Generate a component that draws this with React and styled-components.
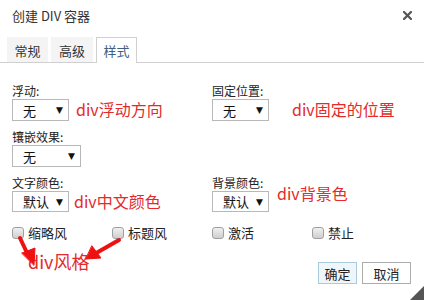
import React from 'react';
import styled, { createGlobalStyle } from 'styled-components';

const Global = createGlobalStyle`
  html, body { margin: 0; padding: 0; background: #fff; }
  body { font-family: "Noto Sans CJK SC", "Liberation Sans", sans-serif; color: #222; }
`;

const Dialog = styled.div`
  position: relative;
  width: 424px;
  height: 300px;
  background: #fff;
  overflow: hidden;
`;

const Header = styled.div`
  display: flex;
  align-items: center;
  justify-content: space-between;
  height: 30px;
  padding: 0 12px 0 12px;
  font-size: 13px;
  color: #333;
`;

const Tabs = styled.div`
  display: flex;
  gap: 3px;
  margin-top: 7px;
  padding: 0 7px;
  height: 25px;
  border-bottom: 1px solid #d0d0d0;
`;

const Tab = styled.div`
  display: flex;
  align-items: center;
  justify-content: center;
  width: ${({ $w }) => $w}px;
  box-sizing: border-box;
  font-size: 13px;
  color: ${({ $active }) => ($active ? '#41607f' : '#333')};
  background: ${({ $active }) => ($active ? '#fff' : '#f4f4f4')};
  border: 1px solid ${({ $active }) => ($active ? '#d0d0d0' : 'transparent')};
  border-bottom: none;
  margin-bottom: ${({ $active }) => ($active ? '-1px' : '0')};
`;

const Body = styled.div`
  padding: 20px 12px 0;
`;

const Grid = styled.div`
  display: grid;
  grid-template-columns: 200px 200px;
  row-gap: 8px;
`;

const Field = styled.div`
  display: flex;
  flex-direction: column;
`;

const Label = styled.div`
  font-size: 12px;
  line-height: 16px;
  height: 16px;
`;

const Line = styled.div`
  display: flex;
  align-items: ${({ $top }) => ($top ? 'flex-start' : 'center')};
`;

const Select = styled.div`
  display: flex;
  align-items: center;
  justify-content: space-between;
  box-sizing: border-box;
  width: ${({ $w }) => $w}px;
  height: ${({ $h }) => $h || 22}px;
  padding: 0 5px 0 10px;
  border: 1px solid #b8b8b8;
  background: #fff;
  font-size: 13px;
  color: #111;
`;

const Arrow = styled.span`
  font-size: 9px;
  color: #111;
  font-family: "DejaVu Sans", sans-serif;
`;

const Note = styled.span`
  margin-left: ${({ $gap }) => $gap}px;
  margin-top: ${({ $top }) => $top || 0}px;
  font-size: ${({ $size }) => $size || 16}px;
  line-height: 1.1;
  color: #e42a2a;
  white-space: nowrap;
`;

const Checks = styled.div`
  display: grid;
  grid-template-columns: repeat(4, 100px);
  margin-top: 14px;
`;

const Check = styled.label`
  display: flex;
  align-items: center;
  gap: 4px;
  font-size: 13px;
  line-height: 14px;
`;

const Box = styled.span`
  width: 12px;
  height: 12px;
  box-sizing: border-box;
  border: 1px solid #a0a0a0;
  border-radius: 3px;
  background: linear-gradient(#f0f0f0, #cfcfcf);
`;

const Bottom = styled.div`
  display: flex;
  align-items: flex-start;
  justify-content: space-between;
  margin-top: 12px;
  padding-right: 1px;
`;

const Buttons = styled.div`
  display: flex;
  gap: 5px;
  margin-top: 10px;
`;

const Button = styled.button`
  box-sizing: border-box;
  width: ${({ $w }) => $w}px;
  height: 22px;
  padding: 0;
  font-family: inherit;
  font-size: 13px;
  color: #222;
  background: ${({ $primary }) => ($primary ? '#eef6fb' : '#fff')};
  border: 1px solid ${({ $primary }) => ($primary ? '#a9cbdc' : '#acacac')};
`;

const Overlay = styled.svg`
  position: absolute;
  left: 0;
  top: 0;
  pointer-events: none;
`;

const Grip = styled.div`
  position: absolute;
  right: 0;
  bottom: 0;
  width: 0;
  height: 0;
  border-style: solid;
  border-width: 0 0 14px 14px;
  border-color: transparent transparent #555 transparent;
`;

function Drop({ value, w, h }) {
  return (
    <Select $w={w} $h={h}>
      <span>{value}</span>
      <Arrow>▼</Arrow>
    </Select>
  );
}

function CloseIcon() {
  return (
    <svg width="9" height="9" viewBox="0 0 9 9">
      <path d="M1 1L8 8M8 1L1 8" stroke="#555" strokeWidth="2.2" strokeLinecap="square" />
    </svg>
  );
}

export default function App() {
  return (
    <Dialog>
      <Global />
      <Header>
        <span>创建 DIV 容器</span>
        <CloseIcon />
      </Header>
      <Tabs>
        <Tab $w={41}>常规</Tab>
        <Tab $w={42}>高级</Tab>
        <Tab $w={41} $active>样式</Tab>
      </Tabs>
      <Body>
        <Grid>
          <Field>
            <Label>浮动:</Label>
            <Line>
              <Drop value="无" w={57} />
              <Note $gap={7}>div浮动方向</Note>
            </Line>
          </Field>
          <Field>
            <Label>固定位置:</Label>
            <Line>
              <Drop value="无" w={57} />
              <Note $gap={23}>div固定的位置</Note>
            </Line>
          </Field>
          <Field>
            <Label>镶嵌效果:</Label>
            <Line>
              <Drop value="无" w={69} />
            </Line>
          </Field>
          <div />
          <Field>
            <Label>文字颜色:</Label>
            <Line>
              <Drop value="默认" w={57} h={21} />
              <Note $gap={5}>div中文颜色</Note>
            </Line>
          </Field>
          <Field>
            <Label>背景颜色:</Label>
            <Line $top>
              <Drop value="默认" w={57} h={21} />
              <Note $gap={8} $top={-6}>div背景色</Note>
            </Line>
          </Field>
        </Grid>
        <Checks>
          <Check><Box />缩略风</Check>
          <Check><Box />标题风</Check>
          <Check><Box />激活</Check>
          <Check><Box />禁止</Check>
        </Checks>
        <Bottom>
          <Note $gap={16} $size={18}>div风格</Note>
          <Buttons>
            <Button $primary $w={39}>确定</Button>
            <Button $w={49}>取消</Button>
          </Buttons>
        </Bottom>
      </Body>
      <Overlay width="424" height="300" viewBox="0 0 424 300">
        <g fill="#ee1111" stroke="#ee1111" strokeLinecap="round">
          <line x1="20" y1="238" x2="28" y2="255" strokeWidth="4" />
          <polygon points="22,253 35,248 34,265" strokeWidth="1" />
          <line x1="119" y1="240" x2="98" y2="252" strokeWidth="4" />
          <polygon points="92,246 101,258 86,259" strokeWidth="1" />
        </g>
      </Overlay>
      <Grip />
    </Dialog>
  );
}
